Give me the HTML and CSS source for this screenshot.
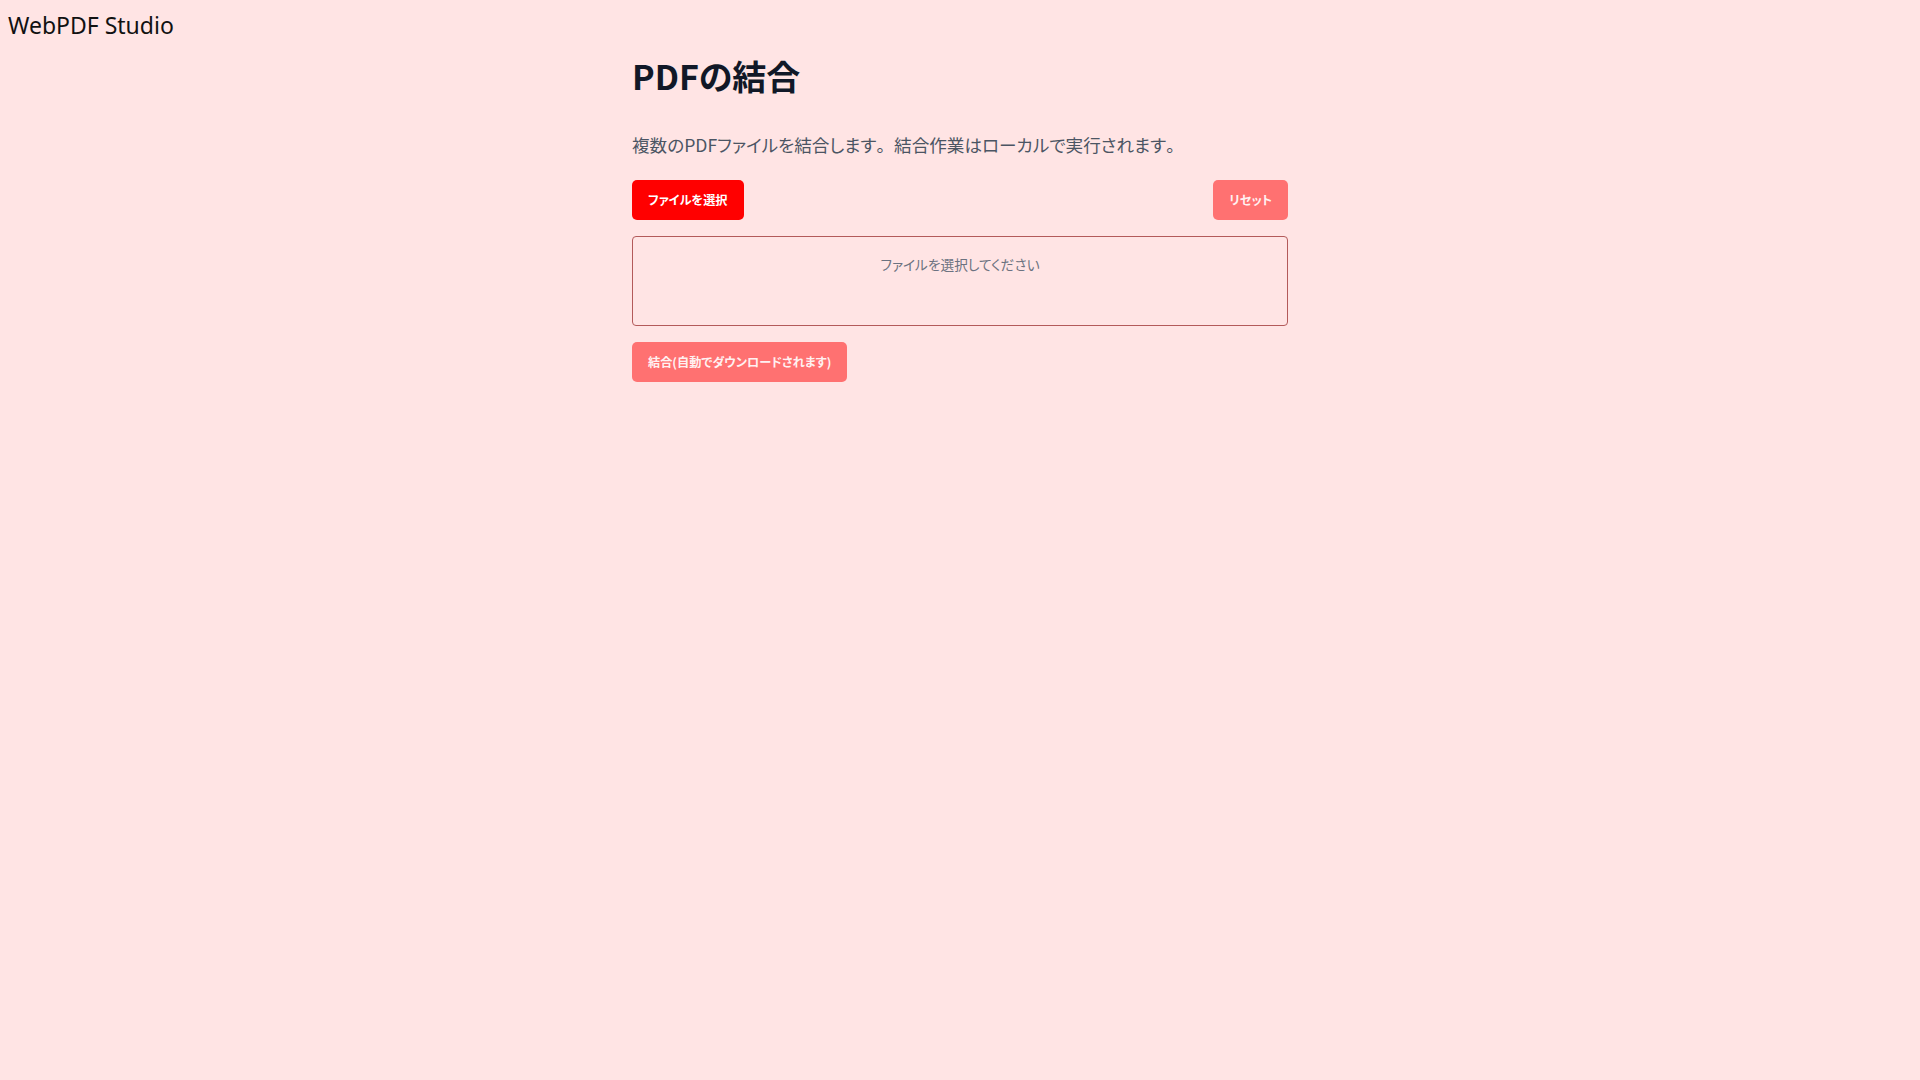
FILE: index.html
```html
<!DOCTYPE html>
<html lang="ja">
<head>
<meta charset="utf-8">
<title>WebPDF Studio - PDFの結合</title>
<link rel="stylesheet" href="styles.css">
</head>
<body>
<header class="site-header">WebPDF Studio</header>
<main class="container">
  <h1 class="title">PDFの結合</h1>
  <p class="lead">複数のPDFファイルを結合します<span class="punct">。</span>結合作業はローカルで実行されます<span class="punct">。</span></p>
  <div class="toolbar">
    <button class="btn btn-primary">ファイルを選択</button>
    <button class="btn btn-primary is-disabled">リセット</button>
  </div>
  <div class="file-list">
    <p class="empty">ファイルを選択してください</p>
  </div>
  <button class="btn btn-primary is-disabled">結合(自動でダウンロードされます)</button>
</main>
</body>
</html>
```

FILE: styles.css
```css
* { box-sizing: border-box; }
html, body {
  margin: 0;
  padding: 0;
  background: #ffe4e4;
  font-family: "Noto Sans CJK JP", "Noto Sans", sans-serif;
  font-feature-settings: "palt";
}
.site-header {
  font-family: "Noto Sans", "Noto Sans CJK JP", sans-serif;
  font-size: 23px;
  line-height: 32px;
  color: #111;
  padding: 9px 8px 0 8px;
  height: 48px;
}
.container {
  width: 656px;
  margin: 0 auto;
}
.title {
  margin: 8px 0 0 0;
  font-size: 34px;
  line-height: 40px;
  font-weight: 700;
  color: #111827;
}
.lead {
  margin: 35px 0 0 0;
  font-size: 17.6px;
  line-height: 28px;
  color: #4b5563;
}
.punct { font-feature-settings: normal; }
.toolbar {
  display: flex;
  justify-content: space-between;
  margin-top: 21px;
}
.btn {
  border: none;
  border-radius: 5px;
  height: 40px;
  padding: 0 16px;
  font-family: inherit;
  font-feature-settings: "palt";
  font-size: 12.2px;
  font-weight: 700;
  color: #fff;
  cursor: pointer;
}
.btn-primary { background: #ff0000; }
.is-disabled { opacity: 0.5; }
.file-list {
  margin: 16px 0;
  border: 1px solid #b35a5a;
  border-radius: 4px;
  min-height: 90px;
  padding: 15px 16px;
}
.empty {
  margin: 0;
  text-align: center;
  font-size: 13.7px;
  line-height: 24px;
  color: #6b7280;
}
```
